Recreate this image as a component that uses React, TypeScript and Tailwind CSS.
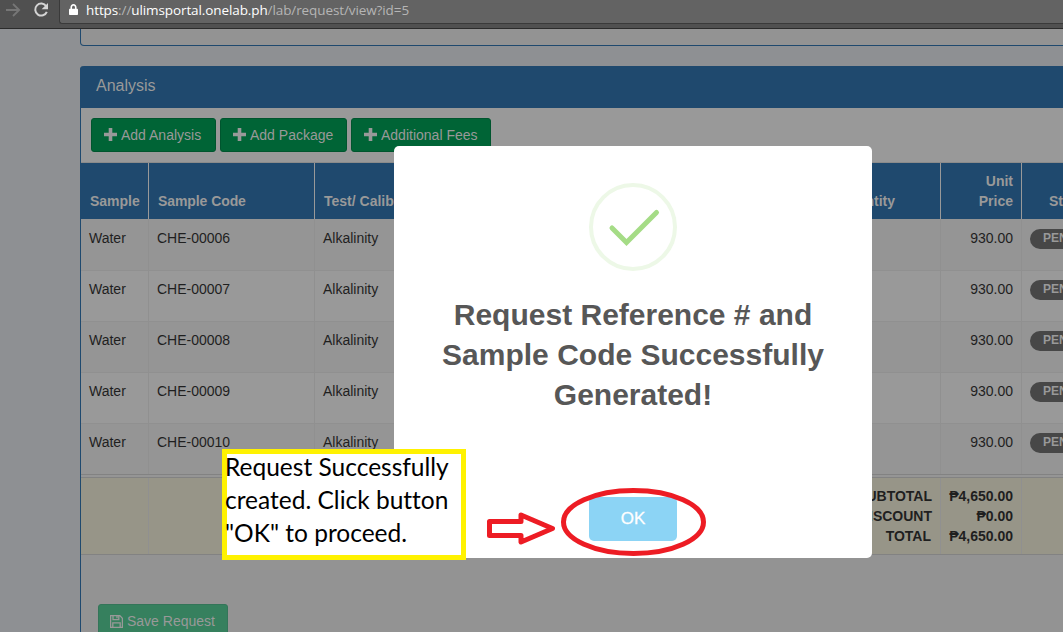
import { FaLock } from 'react-icons/fa';

const samples = ['CHE-00006', 'CHE-00007', 'CHE-00008', 'CHE-00009', 'CHE-00010'];
const columns = 'grid grid-cols-[68px_166px_450px_176px_81px_100px]';

function BrowserBar() {
  return (
    <div className="flex h-[29px] shrink-0 border-b border-[#2b2b2b] bg-[#505050]">
      <div className="flex w-[59px] shrink-0 pt-[1px]">
        <svg width="59" height="20" viewBox="0 0 59 20" fill="none">
          <path d="M6 9H19M13 3L19.2 9L13 15" stroke="#767676" strokeWidth="1.8" />
          <path d="M46.2 5.2A6 6 0 1 0 46.8 10.8" stroke="#d4d4d4" strokeWidth="2" />
          <path d="M48 2V8.2H41.6Z" fill="#d4d4d4" />
        </svg>
      </div>
      <div className="flex h-[24px] flex-1 rounded-bl-[3px] border-b border-l border-[#3a3a3a] bg-[#636363] pl-[9px]">
        <FaLock className="mt-[4px] h-[11px] w-[9px] text-white" preserveAspectRatio="none" />
        <div className="ml-[8px] h-[20px] whitespace-nowrap font-['Open_Sans',sans-serif] text-[13.5px] leading-[20px] tracking-[-0.1px] text-[#b5b5b5]">
          <span className="text-white">https</span>://<span className="text-white">ulimsportal.onelab.ph</span>/lab/request/view?id=5
        </div>
      </div>
    </div>
  );
}

function AddButton({ label, width }: { label: string; width: string }) {
  return (
    <button className={`flex h-[34px] items-center whitespace-nowrap rounded-[3px] border border-[#00552e] bg-[#006436] pl-[12px] text-[14px] text-[#999] ${width}`}>
      <svg className="mr-[4px] -mt-px shrink-0" width="13" height="13" viewBox="0 0 13 13">
        <path d="M6.5 0V13M0 6.5H13" stroke="currentColor" strokeWidth="3.6" />
      </svg>
      {label}
    </button>
  );
}

function AnalysisTable() {
  const head = 'flex items-end border-r border-[#999] px-[9px] pb-[8px]';
  const cell = 'border-r border-[#909090] px-[8px]';
  return (
    <div className="w-[1041px] text-[14px] leading-[20px] text-[#1f1f1f]">
      <div className={`${columns} h-[57px] border-t border-[#8b8b8b] bg-[#1f496e] font-bold text-[#999]`}>
        <div className={head}>Sample</div>
        <div className={head}><span className="tracking-[-0.08px]">Sample Code</span></div>
        <div className={head}>Test/ Calibration</div>
        <div className="flex items-end justify-end border-r border-[#999] pr-[45px] pb-[8px]">Quantity</div>
        <div className="flex items-end justify-end border-r border-[#999] pr-[8px] pb-[8px] text-right">Unit<br />Price</div>
        <div className="flex items-end pb-[8px] pl-[27px]">Status</div>
      </div>
      {samples.map((code, i) => {
        const top = i === 0 ? 'pt-[9px]' : 'pt-[8px]';
        return (
          <div key={code} className={`${columns} border-b ${i % 2 ? 'bg-[#999]' : 'bg-[#959595]'} ${i === 0 ? 'h-[52px]' : 'h-[51px]'} ${i === 4 ? 'border-[#828282]' : 'border-[#909090]'}`}>
            <div className={`${cell} ${top}`}>Water</div>
            <div className={`${cell} ${top}`}>{code}</div>
            <div className={`${cell} ${top}`}>Alkalinity</div>
            <div className={cell} />
            <div className={`${cell} ${top} text-right`}>930.00</div>
            <div className={`pl-[8px] ${i === 0 ? 'pt-[10px]' : 'pt-[9px]'}`}>
              <div className="h-[20px] w-[90px] rounded-full bg-[#474747] pl-[13px] text-[12px] font-bold leading-[19px] text-[#999]">PENDING</div>
            </div>
          </div>
        );
      })}
      <div className="h-[3px] border-b border-[#828282] bg-[#959595]" />
      <div className={`${columns} h-[77px] border-b border-[#828282] bg-[#979588] font-bold`}>
        <div className={cell} />
        <div className={cell} />
        <div className={cell} />
        <div className={`${cell} pt-[8px] text-right`}>SUBTOTAL<br />DISCOUNT<br /><span className="mr-[1px]">TOTAL</span></div>
        <div className={`${cell} whitespace-nowrap pt-[8px] pl-0 text-right`}>₱4,650.00<br />₱0.00<br />₱4,650.00</div>
        <div />
      </div>
    </div>
  );
}

function SuccessDialog() {
  return (
    <div className="absolute left-[394px] top-[146px] flex h-[412px] w-[478px] flex-col items-center rounded-[5px] bg-white">
      <svg className="mt-[37px] shrink-0" width="88" height="88" viewBox="0 0 88 88" fill="none">
        <circle cx="44" cy="44" r="42" stroke="#edf8e7" strokeWidth="4" />
        <path d="M23 45L37.5 59.5L67.5 29.5" stroke="#a5dc86" strokeWidth="5" strokeLinecap="round" />
      </svg>
      <h2 className="mt-[24px] whitespace-nowrap text-center text-[30px] font-bold leading-[40px] text-[#575757]">
        Request Reference # and<br />Sample Code Successfully<br />Generated!
      </h2>
      <button className="mt-[82px] h-[44px] w-[88px] rounded-[5px] bg-[#8cd4f5] text-[17px] leading-[42px] text-white [-webkit-text-stroke:0.3px_white]">OK</button>
    </div>
  );
}

function Annotations() {
  return (
    <>
      <div className="absolute left-[222px] top-[449px] h-[111px] w-[244px] whitespace-nowrap border-[5px] border-[#fff200] bg-white font-['Lato',sans-serif] text-[24.5px] leading-[33px] text-black [font-variant-ligatures:none]">
        <div className="-mt-[4px] -ml-[2px]">Request Successfully<br />created. Click button<br />"OK" to proceed.</div>
      </div>
      <svg className="absolute left-[480px] top-[480px]" width="240" height="85" viewBox="0 0 240 85" fill="none">
        <path d="M9.5 41.5H41V35L72.5 48.5L41 62V55.5H9.5Z" stroke="#ed1c24" strokeWidth="5" strokeLinejoin="round" />
        <ellipse cx="153.5" cy="42" rx="70" ry="31.5" stroke="#ed1c24" strokeWidth="5" />
      </svg>
    </>
  );
}

export default function App() {
  return (
    <div className="relative flex h-[632px] w-[1063px] flex-col overflow-hidden bg-[#8e9093] font-['Liberation_Sans',Arial,sans-serif]">
      <BrowserBar />
      <div className="ml-[80px] flex min-h-0 w-[1100px] flex-1 flex-col">
        <div className="h-[17px] shrink-0 rounded-b-[4px] border border-t-0 border-[#1f496e] bg-[#939393]" />
        <section className="mt-[20px] h-[600px] shrink-0 rounded-t-[4px] border-l border-[#1f496e] bg-[#939393]">
          <h1 className="-ml-px h-[42px] rounded-t-[4px] bg-[#1f496e] pl-[16px] text-[16px] leading-[40px] text-[#999]">Analysis</h1>
          <div className="flex h-[54px] gap-[4px] bg-[#999] pt-[10px] pl-[10px]">
            <AddButton label="Add Analysis" width="w-[125px]" />
            <AddButton label="Add Package" width="w-[127px]" />
            <AddButton label="Additional Fees" width="w-[140px]" />
          </div>
          <AnalysisTable />
          <button className="mt-[49px] ml-[17px] flex h-[34px] w-[130px] items-center whitespace-nowrap rounded-[3px] border border-[#347559] bg-[#36805e] pl-[11px] text-[14px] text-[#999]">
            <svg className="mr-[4px]" width="13" height="13" viewBox="0 0 13 13" fill="none" stroke="currentColor" strokeWidth="1.3">
              <path d="M.6.6H9.8L12.4 3.2V12.4H.6ZM3 .6V4.6H8.8V.6M2.8 12.4V7.8H10.2V12.4M7 .9V3.2" />
            </svg>
            Save Request
          </button>
        </section>
      </div>
      <SuccessDialog />
      <Annotations />
    </div>
  );
}
